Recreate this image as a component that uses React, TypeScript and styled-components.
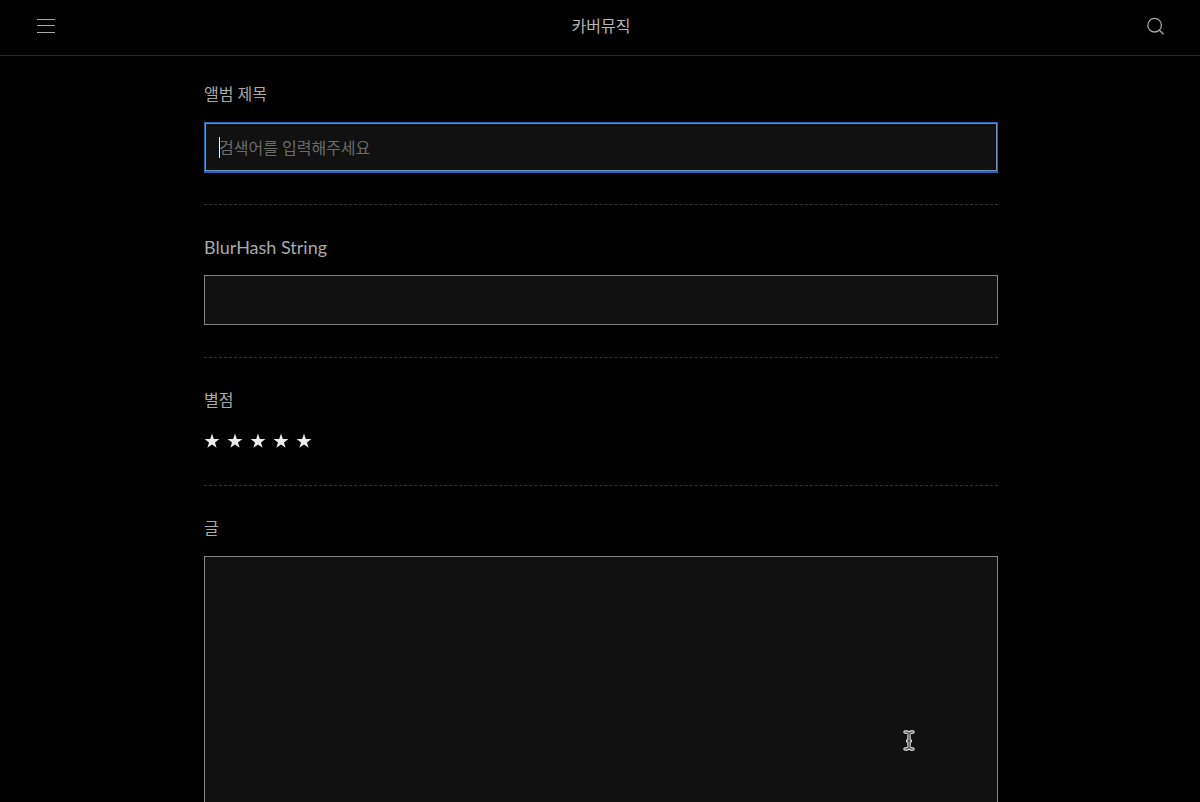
import React, { useState } from "react";
import styled, { createGlobalStyle } from "styled-components";

const GlobalStyle = createGlobalStyle`
  *, *::before, *::after { box-sizing: border-box; }
  html { scrollbar-width: none; background: #000; }
  body {
    margin: 0;
    background: #000;
    color: #a9a9a9;
    font-family: Lato, "Noto Sans CJK KR", sans-serif;
    font-size: 16px;
    line-height: 24px;
  }
`;

const Header = styled.header`
  display: flex;
  align-items: center;
  justify-content: space-between;
  height: 56px;
  padding: 0 35px 3px;
  border-bottom: 1px solid #2b2b2b;
`;

const IconButton = styled.button`
  display: flex;
  padding: 0;
  border: 0;
  background: none;
  color: #a6a6a6;
  cursor: pointer;
`;

const SiteTitle = styled.a`
  color: #b4b4b4;
  text-decoration: none;
`;

const Page = styled.main`
  padding: 26px 0 32px 2px;
`;

const Form = styled.form`
  max-width: 794px;
  margin: 0 auto;
`;

const Field = styled.div`
  display: flex;
  flex-direction: column;
  gap: 16px;
  padding-bottom: 32px;

  & + & {
    padding-top: 30px;
    border-top: 1px dashed #333;
  }
`;

const Label = styled.label<{ $latin?: boolean }>`
  align-self: flex-start;
  font-size: ${(p) => (p.$latin ? "18px" : "16px")};
`;

const InputFrame = styled.div<{ $caret?: boolean }>`
  position: relative;

  &::before {
    content: ${(p) => (p.$caret ? '""' : "none")};
    position: absolute;
    left: 15px;
    top: 15px;
    width: 1px;
    height: 21px;
    background: #f0f0f0;
  }
`;

const TextInput = styled.input<{ $active?: boolean }>`
  display: block;
  width: 100%;
  height: 50px;
  padding: 0 14px;
  border: 1px solid ${(p) => (p.$active ? "#2563b8" : "#858585")};
  border-radius: 0;
  outline: 0;
  box-shadow: ${(p) => (p.$active ? "inset 0 0 0 1px #6f93c0, 0 1px 0 #2563b8" : "none")};
  background: #111;
  color: #ddd;
  font: inherit;
  caret-color: ${(p) => (p.$active ? "transparent" : "#f0f0f0")};

  &::placeholder { color: #6b6b6b; opacity: 1; }
`;

const TextArea = styled.textarea`
  display: block;
  width: 100%;
  height: 400px;
  padding: 14px;
  border: 1px solid #858585;
  border-radius: 0;
  outline: 0;
  background: #111;
  color: #ddd;
  font: inherit;
  resize: none;
`;

const Stars = styled.div`
  display: flex;
  align-items: center;
  gap: 7px;
  height: 25px;
`;

const StarButton = styled.button<{ $on: boolean }>`
  display: flex;
  padding: 0;
  border: 0;
  background: none;
  color: ${(p) => (p.$on ? "#ececec" : "#444")};
  cursor: pointer;
`;

const Pointer = styled.svg`
  position: absolute;
  right: 83px;
  top: 173px;
  pointer-events: none;
`;

const MenuIcon = () => (
  <svg width="22" height="22" viewBox="0 0 22 22" fill="none" stroke="currentColor" aria-hidden="true">
    <path d="M2 4.5h18M2 10.5h18M2 17.5h18" />
  </svg>
);

const SearchIcon = () => (
  <svg width="20" height="20" viewBox="0 0 20 20" fill="none" stroke="currentColor" strokeWidth="1.3" aria-hidden="true">
    <circle cx="9.6" cy="9.2" r="6.8" />
    <path d="M14.4 14.2l4.2 4" />
  </svg>
);

const StarIcon = () => (
  <svg width="16" height="16" viewBox="0 0 16 16" fill="currentColor" aria-hidden="true">
    <path d="M8 .6l1.8 5.3 5.6.1-4.4 3.4 1.600 5.400L8 11.600l-4.600 3.200 1.600-5.400L.600 6l5.600-.1z" />
  </svg>
);

export default function App() {
  const [rating, setRating] = useState(5);

  return (
    <>
      <GlobalStyle />
      <Header>
        <IconButton type="button" aria-label="메뉴">
          <MenuIcon />
        </IconButton>
        <SiteTitle href="/">카버뮤직</SiteTitle>
        <IconButton type="button" aria-label="검색">
          <SearchIcon />
        </IconButton>
      </Header>
      <Page>
        <Form>
          <Field>
            <Label htmlFor="album">앨범 제목</Label>
            <InputFrame $caret>
              <TextInput id="album" type="text" placeholder="검색어를 입력해주세요" $active />
            </InputFrame>
          </Field>
          <Field>
            <Label htmlFor="blurhash" $latin>BlurHash String</Label>
            <InputFrame>
              <TextInput id="blurhash" type="text" />
            </InputFrame>
          </Field>
          <Field role="group" aria-labelledby="rating-label">
            <Label as="span" id="rating-label">별점</Label>
            <Stars>
              {[1, 2, 3, 4, 5].map((n) => (
                <StarButton
                  key={n}
                  type="button"
                  aria-label={`${n}점`}
                  aria-pressed={n === rating}
                  $on={n <= rating}
                  onClick={() => setRating(n)}
                >
                  <StarIcon />
                </StarButton>
              ))}
            </Stars>
          </Field>
          <Field>
            <Label htmlFor="text">글</Label>
            <InputFrame>
              <TextArea id="text" />
              <Pointer width="12" height="22" viewBox="0 0 12 22" fill="none" strokeLinecap="round" aria-hidden="true">
                <path d="M2 3h2l2 1.500L8 3h2M6 4.500v14M2 20h2l2-1.500L8 20h2M4.500 12h3" stroke="#e8e8e8" strokeWidth="3.4" />
                <path d="M2 3h2l2 1.500L8 3h2M6 4.500v14M2 20h2l2-1.500L8 20h2M4.500 12h3" stroke="#333" strokeWidth="1.2" />
              </Pointer>
            </InputFrame>
          </Field>
        </Form>
      </Page>
    </>
  );
}
